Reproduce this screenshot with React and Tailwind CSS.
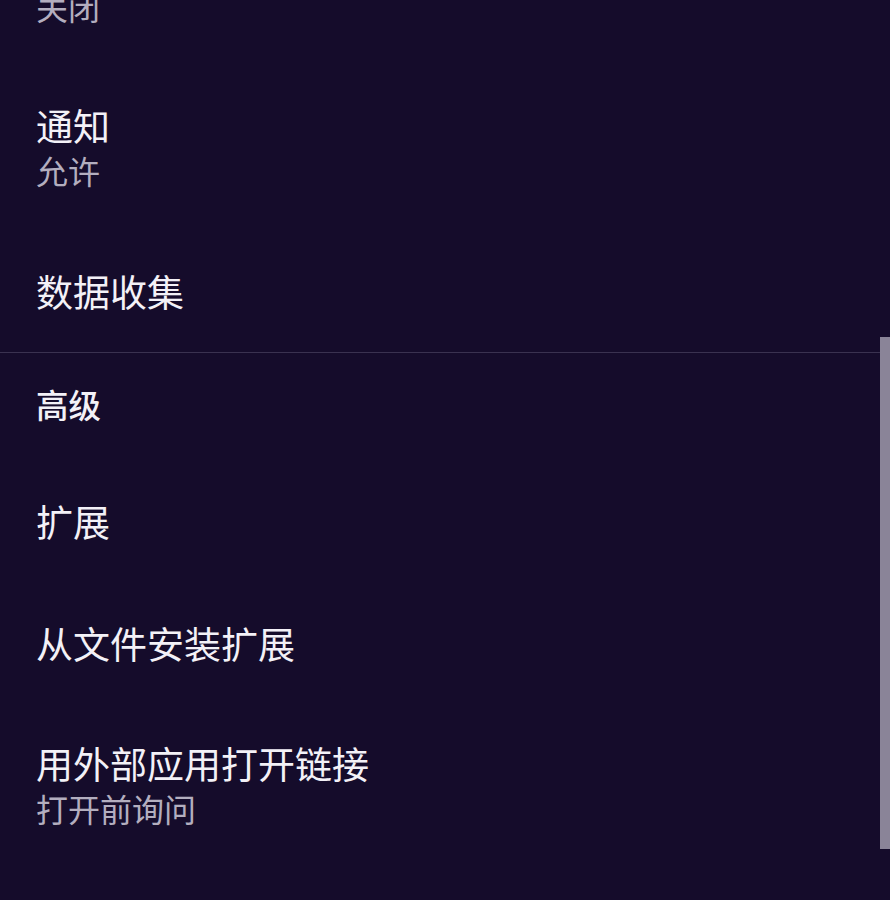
const cjk = { fontFamily: '"Noto Sans CJK SC", "Noto Sans", sans-serif' };

function Row({ title, summary }) {
    if (!summary) {
        return (
            <div className="h-[122px] flex items-center pl-[36px]">
                <span className="text-[37px] leading-[44px] text-[#f3f1f7]">{title}</span>
            </div>
        );
    }
    return (
        <div className="flex flex-col py-[37px] pl-[36px]">
            <span className="text-[37px] leading-[44px] text-[#f3f1f7]">{title}</span>
            <span className="text-[32px] leading-[46px] text-[#b3aebf]">{summary}</span>
        </div>
    );
}

export default function App() {
    return (
        <div className="relative h-[900px] w-full overflow-hidden bg-[#150c2b]" style={cjk}>
            {/* previous row, scrolled mostly off screen */}
            <div className="h-[66px] flex flex-col justify-end pb-[37px] pl-[36px]">
                <span className="text-[32px] leading-[46px] text-[#b3aebf]">关闭</span>
            </div>

            <Row title="通知" summary="允许" />
            <Row title="数据收集" />

            <div className="h-px bg-[#3a3250]" />

            {/* section header */}
            <div className="h-[107px] pt-[31px] pl-[36px]">
                <span className="text-[32.5px] leading-[40px] font-medium text-[#f3f1f7]">高级</span>
            </div>

            <Row title="扩展" />
            <Row title="从文件安装扩展" />
            <Row title="用外部应用打开链接" summary="打开前询问" />

            {/* scrollbar thumb */}
            <div className="absolute right-0 top-[337px] w-[10px] h-[512px] bg-[#8a8498]" />
        </div>
    );
}
